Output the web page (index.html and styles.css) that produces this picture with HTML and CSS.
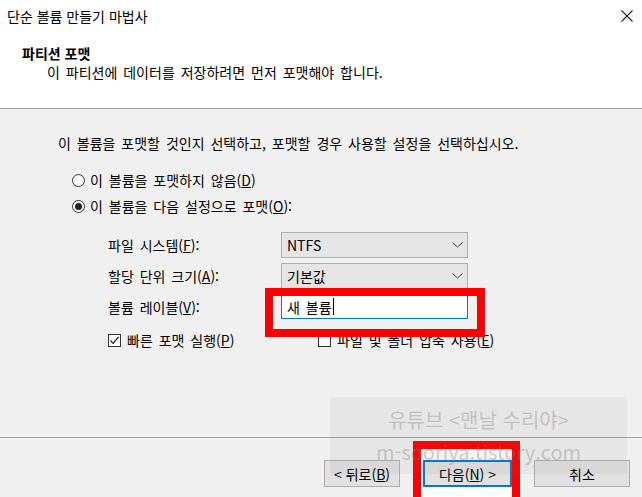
FILE: index.html
```html
<!DOCTYPE html>
<html lang="ko">
<head>
<meta charset="utf-8">
<title>단순 볼륨 만들기 마법사</title>
<link rel="stylesheet" href="styles.css">
</head>
<body>
<div class="window">
  <div class="titlebar">
    <span class="title">단순 볼륨 만들기 마법사</span>
    <svg class="close" width="12" height="12" viewBox="0 0 12 12"><path d="M0.5 0.5 L11.5 11.5 M11.5 0.5 L0.5 11.5" stroke="#222" stroke-width="1.1" fill="none"/></svg>
  </div>
  <div class="header">
    <div class="h-title">파티션 포맷</div>
    <div class="h-sub">이 파티션에 데이터를 저장하려면 먼저 포맷해야 합니다.</div>
  </div>
  <div class="content">
    <div class="instruction">이 볼륨을 포맷할 것인지 선택하고, 포맷할 경우 사용할 설정을 선택하십시오.</div>
    <div class="radios">
      <div class="radio-row"><span class="radio"></span><span>이 볼륨을 포맷하지 않음(<u>D</u>)</span></div>
      <div class="radio-row"><span class="radio checked"></span><span>이 볼륨을 다음 설정으로 포맷(<u>O</u>):</span></div>
    </div>
    <div class="form">
      <div class="label">파일 시스템(<u>F</u>):</div>
      <div class="combo"><span>NTFS</span><svg width="11" height="6" viewBox="0 0 11 6"><path d="M0.5 0.5 L5.5 5 L10.5 0.5" stroke="#444" stroke-width="1" fill="none"/></svg></div>
      <div class="label">할당 단위 크기(<u>A</u>):</div>
      <div class="combo"><span>기본값</span><svg width="11" height="6" viewBox="0 0 11 6"><path d="M0.5 0.5 L5.5 5 L10.5 0.5" stroke="#444" stroke-width="1" fill="none"/></svg></div>
      <div class="label">볼륨 레이블(<u>V</u>):</div>
      <div class="textfield"><span>새 볼륨</span><span class="caret"></span></div>
    </div>
    <div class="checks">
      <div class="check-row first"><span class="checkbox checked"><svg width="11" height="11" viewBox="0 0 11 11"><path d="M1.5 5.5 L4.2 8.3 L9.5 2" stroke="#222" stroke-width="1.2" fill="none"/></svg></span><span>빠른 포맷 실행(<u>P</u>)</span></div>
      <div class="check-row"><span class="checkbox"></span><span>파일 및 폴더 압축 사용(<u>E</u>)</span></div>
    </div>
  </div>
  <div class="footer">
    <button class="btn btn-back">&lt; 뒤로(<u>B</u>)</button>
    <button class="btn btn-next">다음(<u>N</u>) &gt;</button>
    <button class="btn btn-cancel">취소</button>
  </div>
  <div class="mark mark-field"></div>
  <div class="mark mark-next"></div>
  <div class="watermark">
    <div>유튜브 &lt;맨날 수리야&gt;</div>
    <div>m-sooriya.tistory.com</div>
  </div>
</div>
</body>
</html>
```
FILE: styles.css
```css
* { box-sizing: border-box; }
html, body { margin: 0; padding: 0; background: #f0f0f0; }
body {
  font-family: "Noto Sans CJK KR", "Noto Sans", "Liberation Sans", sans-serif;
  font-size: 14px;
  color: #000;
}
u { text-decoration: underline; text-underline-offset: 1px; }

.window {
  position: relative;
  width: 642px;
  height: 497px;
  overflow: hidden;
  display: flex;
  flex-direction: column;
}

.titlebar {
  height: 31px;
  background: #fff;
  display: flex;
  align-items: center;
  justify-content: space-between;
  padding: 0 9px 0 7px;
  line-height: 18px;
}
.close { display: block; margin-top: 1px; }

.header {
  height: 78px;
  background: #fff;
  border-bottom: 1px solid #a0a0a0;
  padding: 13px 0 0 22px;
  line-height: 19px;
}
.h-title { font-weight: bold; }
.h-sub { padding-left: 25px; word-spacing: 2px; }

.content {
  height: 328px;
  padding: 25px 0 0 58px;
  line-height: 18px;
  word-spacing: 2px;
}
.radios { margin-top: 15px; padding-left: 14px; }
.radio-row {
  height: 26px;
  display: flex;
  align-items: center;
  gap: 5px;
}
.radio {
  width: 13px;
  height: 13px;
  border: 1px solid #333;
  border-radius: 50%;
  background: #fff;
  display: flex;
  align-items: center;
  justify-content: center;
}
.radio.checked::after {
  content: "";
  width: 7px;
  height: 7px;
  border-radius: 50%;
  background: #222;
}

.form {
  margin-top: 13px;
  margin-left: 50px;
  display: grid;
  grid-template-columns: 173px 187px;
  grid-template-rows: 26px 26px 25px;
  row-gap: 5px;
}
.label { display: flex; align-items: center; }
.combo {
  background: #e5e5e5;
  border: 1px solid #adadad;
  display: flex;
  align-items: center;
  justify-content: space-between;
  padding: 0 4px 0 5px;
}
.textfield {
  background: #fff;
  border: 1px solid #0078d7;
  display: flex;
  align-items: center;
  padding: 0 0 0 5px;
}
.caret {
  display: inline-block;
  width: 1px;
  height: 17px;
  background: #000;
  margin-left: 1px;
}

.checks {
  margin-top: 11px;
  margin-left: 50px;
  display: flex;
  height: 20px;
}
.check-row { display: flex; align-items: center; gap: 6px; }
.check-row.first { width: 210px; }
.checkbox {
  width: 13px;
  height: 13px;
  border: 1px solid #333;
  background: #fff;
  display: flex;
  align-items: center;
  justify-content: center;
}
.checkbox svg { display: block; }

.footer {
  flex: 1;
  border-top: 1px solid #a0a0a0;
  display: flex;
  align-items: flex-start;
  padding: 22px 0 0 324px;
}
.btn {
  font-family: inherit;
  font-size: 14px;
  height: 27px;
  background: #e1e1e1;
  border: 1px solid #adadad;
  padding: 0;
  color: #000;
  line-height: 18px;
}
.btn-back { width: 76px; }
.btn-next {
  width: 89px;
  margin-left: 23px;
  border: 2px solid #0078d7;
  position: relative;
  z-index: 2;
}
.btn-cancel { width: 96px; margin-left: 22px; }

.mark {
  position: absolute;
  border: 8px solid #ff0000;
}
.mark-field {
  left: 265px;
  top: 288px;
  width: 220px;
  height: 49px;
  z-index: 3;
}
.mark-next {
  left: 413px;
  top: 441px;
  width: 107px;
  height: 70px;
  background: #fff;
  z-index: 1;
}

.watermark {
  position: absolute;
  left: 330px;
  top: 397px;
  width: 297px;
  height: 77px;
  background: rgba(110, 110, 110, 0.08);
  z-index: 5;
  color: rgba(120, 120, 120, 0.35);
  font-size: 20px;
  line-height: 32px;
  text-align: center;
  padding-top: 7px;
}
```
